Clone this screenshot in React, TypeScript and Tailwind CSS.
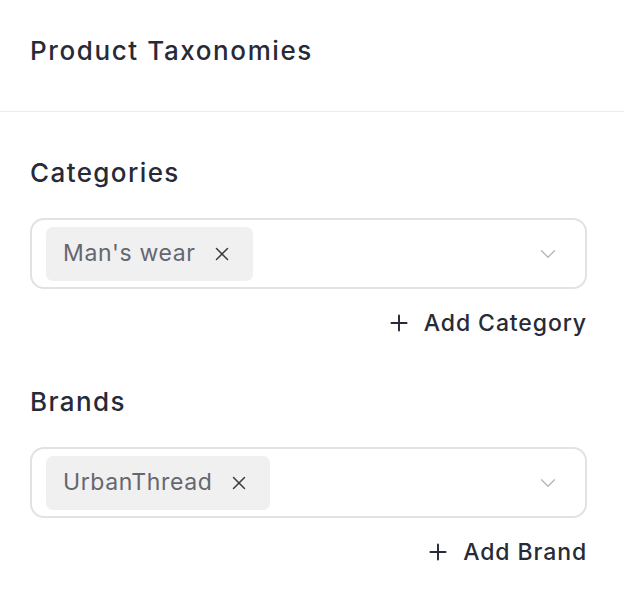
import React from 'react';
import { X, ChevronDown, Plus } from 'lucide-react';

type Field = {
  label: string;
  value: string;
  action: string;
};

const fields: Field[] = [
  { label: 'Categories', value: "Man's wear", action: 'Add Category' },
  { label: 'Brands', value: 'UrbanThread', action: 'Add Brand' },
];

const App: React.FC = () => {
  return (
    <div className="w-[624px] h-[604px] bg-white text-[#272a37]" style={{ fontFamily: 'Inter, "Noto Sans", sans-serif' }}>
      {/* Header */}
      <div className="h-[112px] px-[30px] flex items-center border-b border-[#ececee]">
        <h2 className="text-[26px] font-medium tracking-[1.6px] pb-[10px]">Product Taxonomies</h2>
      </div>

      <div className="pl-[30px] pr-[37px] pt-[43px] flex flex-col gap-[45px]">
        {fields.map((field) => (
          <div key={field.label}>
            <div className="text-[26px] font-medium tracking-[1.4px] leading-[36px] mb-[27px]">{field.label}</div>
            <div className="h-[71px] rounded-[14px] border-2 border-[#e2e2e4] flex items-center justify-between pl-[14px] pr-[24px]">
              <span className="h-[54px] rounded-[7px] bg-[#f0f0f1] flex items-center gap-[16px] pl-[17px] pr-[20px] text-[23px] tracking-[0.6px] text-[#66666f]">
                {field.value}
                <X size={22} strokeWidth={1.6} className="text-[#3a3a44]" />
              </span>
              <ChevronDown size={26} strokeWidth={1.2} className="text-[#b5b5ba]" />
            </div>
            <div className="flex justify-end mt-[18px]">
              <button className="flex items-center gap-[12px] text-[23px] font-medium tracking-[0.9px] leading-[32px]">
                <Plus size={26} strokeWidth={1.8} />
                {field.action}
              </button>
            </div>
          </div>
        ))}
      </div>
    </div>
  );
};

export default App;
